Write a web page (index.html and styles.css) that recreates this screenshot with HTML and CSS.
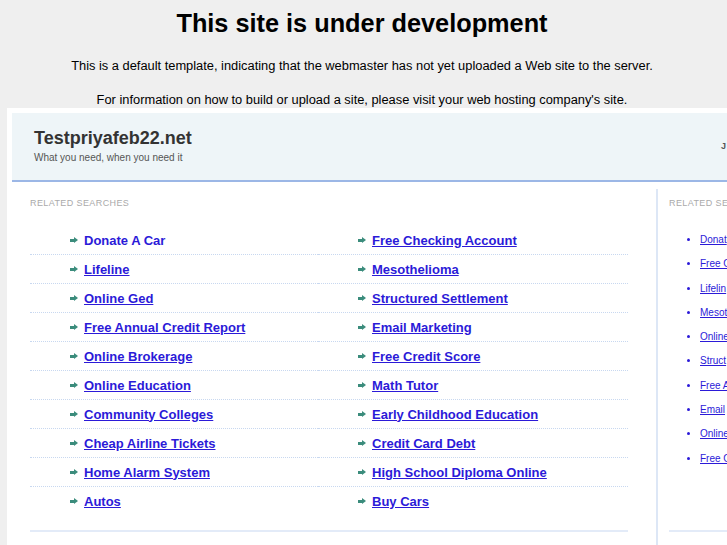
FILE: index.html
```html
<!DOCTYPE html>
<html>
<head>
<meta charset="utf-8">
<link rel="stylesheet" href="styles.css">
</head>
<body>
<div class="notice">
  <h1>This site is under development</h1>
  <p>This is a default template, indicating that the webmaster has not yet uploaded a Web site to the server.</p>
  <p>For information on how to build or upload a site, please visit your web hosting company's site.</p>
</div>
<div class="frame">
  <div class="header">
    <div class="brand">
      <div class="site-name">Testpriyafeb22.net</div>
      <div class="tagline">What you need, when you need it</div>
    </div>
    <div class="date">J</div>
  </div>
  <div class="content">
    <div class="main">
      <div class="label">Related Searches</div>
      <ul class="links">
        <li><span class="arrow"></span><a class="plain" href="#">Donate A Car</a></li>
        <li><span class="arrow"></span><a href="#">Free Checking Account</a></li>
        <li><span class="arrow"></span><a href="#">Lifeline</a></li>
        <li><span class="arrow"></span><a href="#">Mesothelioma</a></li>
        <li><span class="arrow"></span><a href="#">Online Ged</a></li>
        <li><span class="arrow"></span><a href="#">Structured Settlement</a></li>
        <li><span class="arrow"></span><a href="#">Free Annual Credit Report</a></li>
        <li><span class="arrow"></span><a href="#">Email Marketing</a></li>
        <li><span class="arrow"></span><a href="#">Online Brokerage</a></li>
        <li><span class="arrow"></span><a href="#">Free Credit Score</a></li>
        <li><span class="arrow"></span><a href="#">Online Education</a></li>
        <li><span class="arrow"></span><a href="#">Math Tutor</a></li>
        <li><span class="arrow"></span><a href="#">Community Colleges</a></li>
        <li><span class="arrow"></span><a href="#">Early Childhood Education</a></li>
        <li><span class="arrow"></span><a href="#">Cheap Airline Tickets</a></li>
        <li><span class="arrow"></span><a href="#">Credit Card Debt</a></li>
        <li><span class="arrow"></span><a href="#">Home Alarm System</a></li>
        <li><span class="arrow"></span><a href="#">High School Diploma Online</a></li>
        <li class="last"><span class="arrow"></span><a href="#">Autos</a></li>
        <li class="last"><span class="arrow"></span><a href="#">Buy Cars</a></li>
      </ul>
      <div class="rule"></div>
    </div>
    <div class="side">
      <div class="label">Related Se</div>
      <ul class="side-links">
        <li><a href="#">Donat</a></li>
        <li><a href="#">Free C</a></li>
        <li><a href="#">Lifelin</a></li>
        <li><a href="#">Mesot</a></li>
        <li><a href="#">Online</a></li>
        <li><a href="#">Struct</a></li>
        <li><a href="#">Free A</a></li>
        <li><a href="#">Email</a></li>
        <li><a href="#">Online</a></li>
        <li><a href="#">Free C</a></li>
      </ul>
      <div class="rule side-rule"></div>
    </div>
  </div>
</div>
</body>
</html>
```

FILE: styles.css
```css
html, body {
  margin: 0;
  padding: 0;
  height: 100%;
  overflow: hidden;
}
body {
  background: #efefef;
  font-family: "Liberation Sans", Arial, sans-serif;
  color: #000;
}
.notice {
  text-align: center;
  padding-top: 8px;
  padding-right: 3px;
  height: 101px;
  box-sizing: border-box;
}
.notice h1 {
  margin: 0;
  font-size: 25.3px;
  line-height: 30px;
  font-weight: bold;
}
.notice p {
  margin: 0;
  font-size: 12.85px;
  line-height: 16px;
}
.notice h1 + p {
  margin-top: 20px;
}
.notice p + p {
  margin-top: 18px;
}
.frame {
  margin-left: 7px;
  margin-top: 7px;
  width: 720px;
  height: 437px;
  background: #fff;
  padding: 5px 0 0 5px;
  box-sizing: border-box;
  overflow: hidden;
}
.header {
  background: #eef5f8;
  height: 69px;
  border-bottom: 2px solid #9cb7e6;
  display: flex;
  align-items: flex-start;
  box-sizing: border-box;
}
.brand {
  width: 709px;
  padding-left: 22px;
  padding-top: 14px;
  box-sizing: border-box;
}
.site-name {
  font-size: 18px;
  font-weight: bold;
  color: #333;
  line-height: 22px;
}
.tagline {
  font-size: 10px;
  color: #555;
  line-height: 12px;
  margin-top: 3px;
}
.date {
  padding-top: 28px;
  font-size: 9px;
  font-weight: bold;
  color: #555;
}
.content {
  display: flex;
}
.main {
  width: 598px;
  margin-left: 18px;
  padding-top: 15px;
}
.label {
  font-size: 9px;
  color: #aaa;
  text-transform: uppercase;
  letter-spacing: 0.4px;
  line-height: 12px;
  white-space: nowrap;
}
.links {
  list-style: none;
  margin: 17px 0 0;
  padding: 0;
  display: grid;
  grid-template-columns: 288px 310px;
}
.links li {
  height: 29px;
  padding-left: 40px;
  border-bottom: 1px dotted #c8d8f0;
  display: flex;
  align-items: center;
  box-sizing: border-box;
}
.links li.last {
  border-bottom: none;
}
.arrow {
  width: 8px;
  height: 7px;
  margin-right: 6px;
  background: linear-gradient(#3b8c7c, #3b8c7c) 0 2px / 5px 3px no-repeat;
  position: relative;
}
.arrow::after {
  content: "";
  position: absolute;
  left: 4px;
  top: 0;
  border-left: 4px solid #3b8c7c;
  border-top: 3.5px solid transparent;
  border-bottom: 3.5px solid transparent;
}
.links a {
  font-size: 13px;
  font-weight: bold;
  color: #2b1ad8;
}
.links a.plain {
  text-decoration: none;
}
.rule {
  border-top: 2px solid #e3ebf8;
  margin-top: 14px;
}
.side {
  margin-left: 28px;
  border-left: 2px solid #dde7f6;
  padding-left: 11px;
  padding-top: 8px;
  margin-top: 7px;
  height: 400px;
  flex: 1;
  min-width: 0;
}
.side-links {
  margin: 25px 0 0;
  padding-left: 31px;
  list-style: disc;
  color: #2b1ad8;
}
.side-links li {
  height: 24.3px;
  font-size: 10px;
  line-height: 12px;
  white-space: nowrap;
}
.side-links a {
  color: #2b1ad8;
}
.side-rule {
  margin-top: 53px;
}
```
